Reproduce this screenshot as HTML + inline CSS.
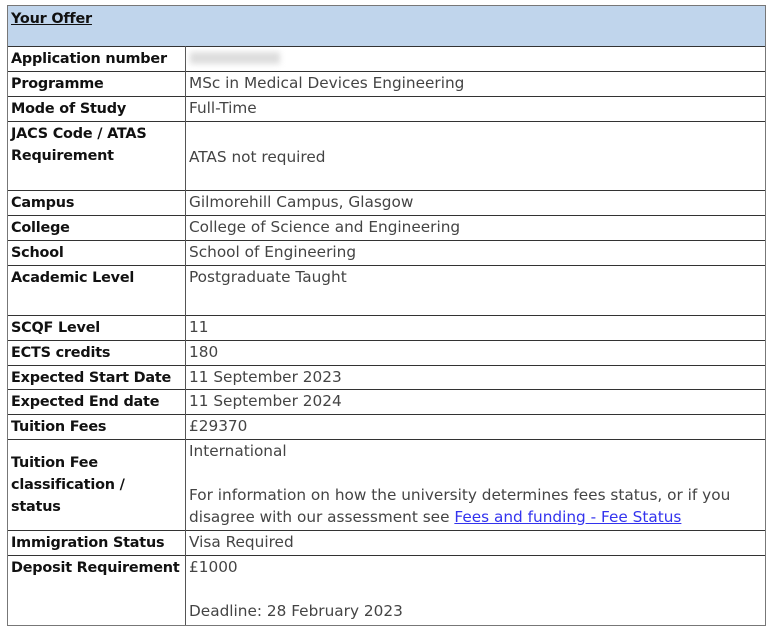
<!DOCTYPE html>
<html><head><meta charset="utf-8"><style>
body{margin:0;background:#fff;width:773px;height:632px;position:relative;overflow:hidden;font-family:"DejaVu Sans","Liberation Sans",sans-serif;font-size:14px;}
.t{position:absolute;left:7px;top:5px;width:759px;height:621px;border:1.5px solid #777;box-sizing:border-box;}
.h{position:absolute;left:8px;top:6px;width:757px;height:40px;background:#c0d5ec;border-bottom:1px solid #333;}
.h span{position:absolute;left:3px;top:2px;font-weight:bold;text-decoration:underline;color:#111;line-height:22px;font-size:14.4px;letter-spacing:-0.2px}
.r{position:absolute;left:8px;width:757px;border-bottom:1px solid #333;}
.l{position:absolute;left:3px;font-weight:bold;color:#111;line-height:22px;white-space:nowrap;letter-spacing:-0.2px;font-size:14.4px;margin-top:1px}
.v{position:absolute;left:181px;color:#444;line-height:22px;white-space:nowrap;font-size:15.3px}
.d{position:absolute;left:177px;top:0;bottom:0;border-left:1px solid #555}
a{color:#3333ee;text-decoration:underline}
.blur{position:absolute;left:190px;top:52px;width:90px;height:12px;background:#ddd;filter:blur(3px)}
</style></head><body>
<div class="h"><span>Your Offer</span></div>
<div class="r" style="top:46px;height:25px"><div class="d"></div><div class="l" style="top:1px">Application number</div></div>
<div class="blur"></div>
<div class="r" style="top:71px;height:25px"><div class="d"></div><div class="l" style="top:1px">Programme</div><div class="v" style="top:1px">MSc in Medical Devices Engineering</div></div>
<div class="r" style="top:96px;height:25px"><div class="d"></div><div class="l" style="top:1px">Mode of Study</div><div class="v" style="top:1px">Full-Time</div></div>
<div class="r" style="top:121px;height:69px"><div class="d"></div><div class="l" style="top:1px">JACS Code / ATAS<br>Requirement</div><div class="v" style="top:25px">ATAS not required</div></div>
<div class="r" style="top:190px;height:25px"><div class="d"></div><div class="l" style="top:1px">Campus</div><div class="v" style="top:1px">Gilmorehill Campus, Glasgow</div></div>
<div class="r" style="top:215px;height:25px"><div class="d"></div><div class="l" style="top:1px">College</div><div class="v" style="top:1px">College of Science and Engineering</div></div>
<div class="r" style="top:240px;height:25px"><div class="d"></div><div class="l" style="top:1px">School</div><div class="v" style="top:1px">School of Engineering</div></div>
<div class="r" style="top:265px;height:50px"><div class="d"></div><div class="l" style="top:1px">Academic Level</div><div class="v" style="top:1px">Postgraduate Taught</div></div>
<div class="r" style="top:315px;height:25px"><div class="d"></div><div class="l" style="top:1px">SCQF Level</div><div class="v" style="top:1px">11</div></div>
<div class="r" style="top:340px;height:25px"><div class="d"></div><div class="l" style="top:1px">ECTS credits</div><div class="v" style="top:1px">180</div></div>
<div class="r" style="top:365px;height:24px"><div class="d"></div><div class="l" style="top:1px">Expected Start Date</div><div class="v" style="top:1px">11 September 2023</div></div>
<div class="r" style="top:389px;height:25px"><div class="d"></div><div class="l" style="top:1px">Expected End date</div><div class="v" style="top:1px">11 September 2024</div></div>
<div class="r" style="top:414px;height:25px"><div class="d"></div><div class="l" style="top:1px">Tuition Fees</div><div class="v" style="top:1px">£29370</div></div>
<div class="r" style="top:439px;height:91px"><div class="d"></div><div class="l" style="top:12px">Tuition Fee<br>classification /<br>status</div><div class="v" style="top:1px">International<br><br>For information on how the university determines fees status, or if you<br>disagree with our assessment see <a>Fees and funding - Fee Status</a></div></div>
<div class="r" style="top:530px;height:25px"><div class="d"></div><div class="l" style="top:1px">Immigration Status</div><div class="v" style="top:1px">Visa Required</div></div>
<div class="r" style="top:555px;height:70px;border-bottom:none"><div class="d"></div><div class="l" style="top:1px">Deposit Requirement</div><div class="v" style="top:1px">£1000<br><br>Deadline: 28 February 2023</div></div>
<div class="t"></div>
</body></html>
